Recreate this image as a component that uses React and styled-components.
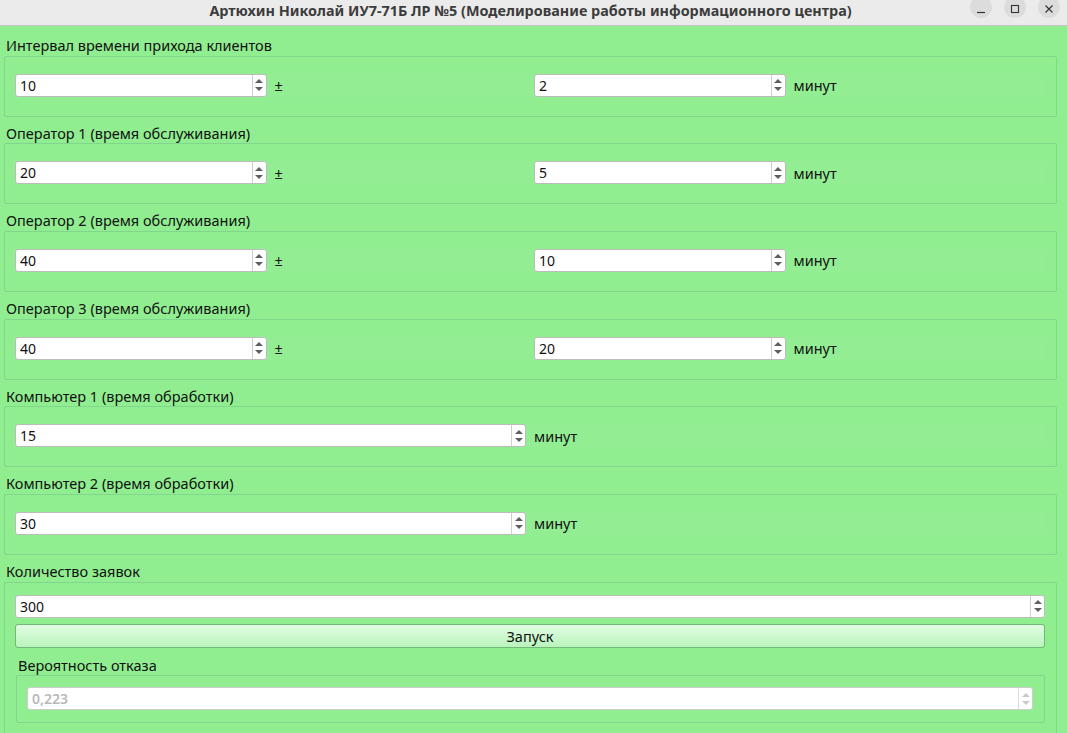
import React from "react";
import styled, { createGlobalStyle } from "styled-components";

const GlobalStyle = createGlobalStyle`
  html, body {
    margin: 0;
    padding: 0;
    background: #90ee90;
  }
  body {
    font-family: "Noto Sans", "DejaVu Sans", sans-serif;
    font-size: 14.5px;
    color: #111;
    overflow: hidden;
  }
`;

const Window = styled.div`
  width: 1067px;
  height: 733px;
  display: flex;
  flex-direction: column;
  background: #90ee90;
  overflow: hidden;
`;

const TitleBar = styled.div`
  height: 25px;
  flex: none;
  border-bottom: 1px solid #c4c4c4;
  background: #ebebeb;
  display: grid;
  grid-template-columns: 1fr auto 1fr;
  align-items: center;
`;

const Title = styled.div`
  font-weight: 700;
  font-size: 14.4px;
  color: #3c3c3c;
  white-space: nowrap;
  margin-top: -4px;
  margin-left: -6px;
`;

const Controls = styled.div`
  justify-self: end;
  align-self: start;
  display: flex;
  gap: 12px;
  margin-top: -4px;
  margin-right: 7px;
`;

const CtlButton = styled.div`
  width: 22px;
  height: 22px;
  border-radius: 50%;
  background: #dcdcdc;
  display: flex;
  align-items: center;
  justify-content: center;
  padding-top: 3px;
  box-sizing: border-box;
`;

const Content = styled.div`
  padding: 9px 10px 0 4px;
  display: flex;
  flex-direction: column;
`;

const Section = styled.div`
  margin-top: ${(p) => (p.$first ? "0" : "6px")};
  margin-left: ${(p) => p.$indent || 0}px;
`;

const GroupLabel = styled.div`
  line-height: 19px;
  height: 18px;
  padding-top: 1px;
  padding-left: 2px;
  margin-bottom: 1.67px;
  white-space: nowrap;
`;

const GroupBox = styled.div`
  border: 1px solid #80d68c;
  border-radius: 2px;
  padding: ${(p) => p.$pad || "17px 11px 19px 10px"};
  display: flex;
  flex-direction: column;
`;

const Row = styled.div`
  display: grid;
  grid-template-columns: repeat(4, 1fr);
  column-gap: 8px;
  align-items: center;
  background: rgba(255, 255, 255, 0.035);
`;

const Unit = styled.span`
  white-space: nowrap;
`;

const Spin = styled.div`
  grid-column: span ${(p) => p.$span || 1};
  height: 23px;
  box-sizing: border-box;
  border: 1px solid ${(p) => (p.$disabled ? "#cdcdcd" : "#bcbcbc")};
  border-radius: 3px;
  background: #fff;
  display: flex;
  align-items: stretch;
`;

const SpinText = styled.div`
  flex: 1;
  padding-left: 4px;
  line-height: 21px;
  font-size: 14px;
  font-weight: ${(p) => (p.$disabled ? 600 : 400)};
  color: ${(p) => (p.$disabled ? "#b9b9b9" : "#111")};
`;

const SpinArrows = styled.div`
  width: 13px;
  border-left: 1px solid ${(p) => (p.$disabled ? "#dedede" : "#cfcfcf")};
  display: flex;
  flex-direction: column;
  align-items: center;
  justify-content: center;
  gap: 4px;
`;

const RunButton = styled.button`
  margin-top: 6px;
  height: 24px;
  border: 1px solid #72b878;
  border-radius: 3px;
  background: linear-gradient(#e2fce2, #b9f4bd);
  font-family: "Noto Sans", "DejaVu Sans", sans-serif;
  font-size: 14.5px;
  color: #111;
  padding: 0;
`;

const Arrow = ({ up, color }) => (
  <svg width="8" height="4" viewBox="0 0 8 4">
    <path d={up ? "M0 4 L4 0 L8 4 Z" : "M0 0 L4 4 L8 0 Z"} fill={color} />
  </svg>
);

const SpinBox = ({ value, span, disabled }) => {
  const c = disabled ? "#cacaca" : "#5f5f5f";
  return (
    <Spin $span={span} $disabled={disabled}>
      <SpinText $disabled={disabled}>{value}</SpinText>
      <SpinArrows $disabled={disabled}>
        <Arrow up color={c} />
        <Arrow color={c} />
      </SpinArrows>
    </Spin>
  );
};

const ranged = [
  { title: "Интервал времени прихода клиентов", a: "10", b: "2" },
  { title: "Оператор 1 (время обслуживания)", a: "20", b: "5" },
  { title: "Оператор 2 (время обслуживания)", a: "40", b: "10" },
  { title: "Оператор 3 (время обслуживания)", a: "40", b: "20" },
];

const single = [
  { title: "Компьютер 1 (время обработки)", a: "15" },
  { title: "Компьютер 2 (время обработки)", a: "30" },
];

const App = () => {
  return (
    <Window>
      <GlobalStyle />
      <TitleBar>
        <div />
        <Title>Артюхин Николай ИУ7-71Б ЛР №5 (Моделирование работы информационного центра)</Title>
        <Controls>
          <CtlButton>
            <svg width="10" height="10" viewBox="0 0 10 10">
              <path d="M1 8.5 H9" stroke="#333" strokeWidth="1.2" />
            </svg>
          </CtlButton>
          <CtlButton>
            <svg width="10" height="10" viewBox="0 0 10 10">
              <rect x="1.5" y="1.5" width="7" height="7" fill="none" stroke="#333" strokeWidth="1.1" />
            </svg>
          </CtlButton>
          <CtlButton>
            <svg width="10" height="10" viewBox="0 0 10 10">
              <path d="M1.5 1.5 L8.5 8.5 M8.5 1.5 L1.5 8.5" stroke="#333" strokeWidth="1.2" />
            </svg>
          </CtlButton>
        </Controls>
      </TitleBar>

      <Content>
        {ranged.map((g, i) => (
          <Section key={g.title} $first={i === 0}>
            <GroupLabel>{g.title}</GroupLabel>
            <GroupBox>
              <Row>
                <SpinBox value={g.a} />
                <Unit>±</Unit>
                <SpinBox value={g.b} />
                <Unit>минут</Unit>
              </Row>
            </GroupBox>
          </Section>
        ))}

        {single.map((g) => (
          <Section key={g.title}>
            <GroupLabel>{g.title}</GroupLabel>
            <GroupBox>
              <Row>
                <SpinBox value={g.a} span={2} />
                <Unit>минут</Unit>
              </Row>
            </GroupBox>
          </Section>
        ))}

        <Section>
          <GroupLabel>Количество заявок</GroupLabel>
          <GroupBox $pad="12px 11px 12px 10px">
            <SpinBox value="300" />
            <RunButton>Запуск</RunButton>
            <Section $indent={1} style={{ marginTop: 7 }}>
              <GroupLabel>Вероятность отказа</GroupLabel>
              <GroupBox $pad="11px 11px 12px 10px">
                <SpinBox value="0,223" disabled />
              </GroupBox>
            </Section>
          </GroupBox>
        </Section>
      </Content>
    </Window>
  );
};

export default App;
